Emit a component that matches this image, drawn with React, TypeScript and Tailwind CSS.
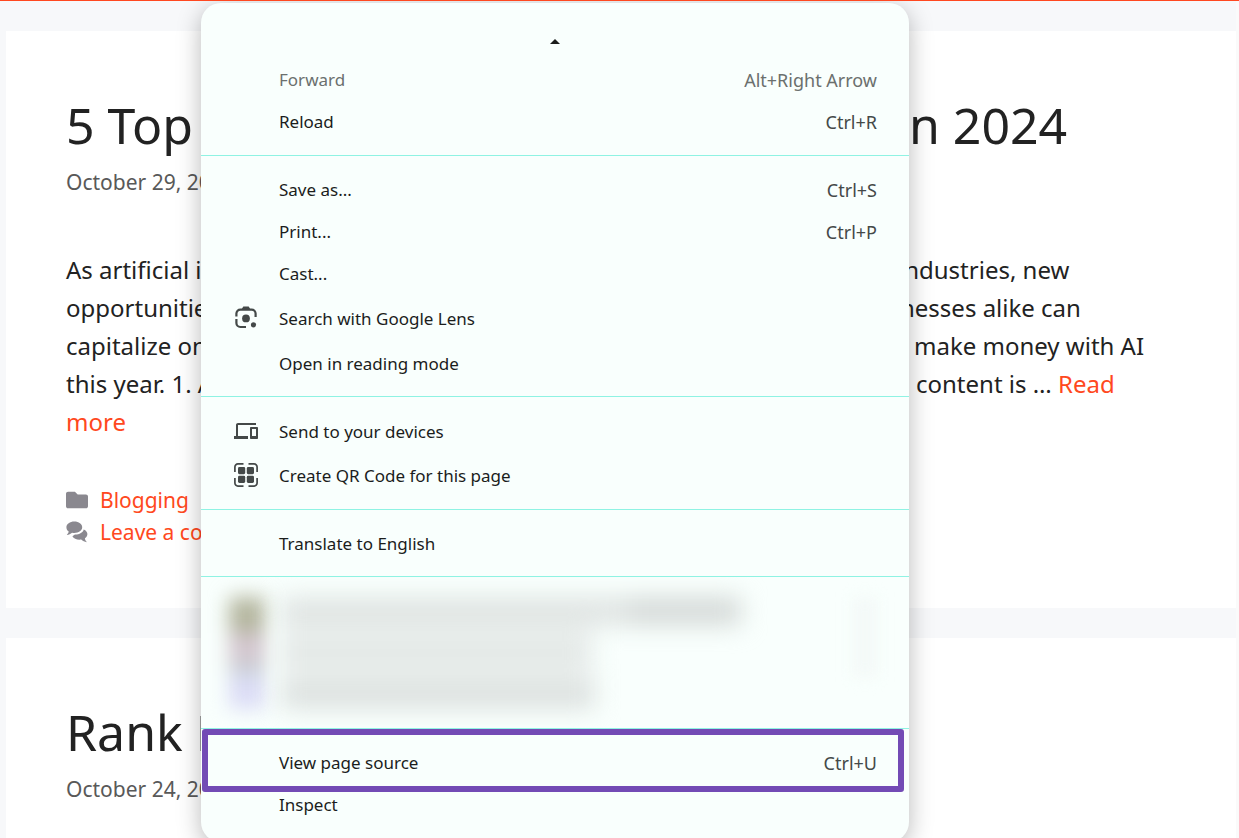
import type { ReactNode } from 'react'
import { FaFolder } from 'react-icons/fa'
import { MdDevices } from 'react-icons/md'

type MenuEntry = {
  label: string
  shortcut?: string
  icon?: ReactNode
  height?: string
  disabled?: boolean
}

function LensIcon() {
  return (
    <svg viewBox="0 0 24 24" className="size-6" fill="none" stroke="currentColor" strokeWidth="2.2">
      <path d="M2.4 10.500V7.600a4 4 0 0 1 4-4h11.200a4 4 0 0 1 4 4V11" />
      <path d="M2.4 13V17a4 4 0 0 0 4 4H12" />
      <path d="M7.500 3.500 9.300.6h5.400l1.800 2.900z" fill="currentColor" stroke="none" />
      <circle cx="12" cy="12.400" r="3.900" fill="currentColor" stroke="none" />
      <circle cx="19.500" cy="18.800" r="2.600" fill="currentColor" stroke="none" />
    </svg>
  )
}

function QrIcon() {
  return (
    <svg viewBox="0 0 24 24" className="size-6" fill="none" stroke="currentColor" strokeWidth="1.7">
      <path d="M.9 9V4a3 3 0 0 1 3-3.100H9.500M14.500.9H20a3 3 0 0 1 3.100 3.100V9M23.100 15v5a3 3 0 0 1-3.100 3.100h-5.500M9.500 23.100H4A3 3 0 0 1 .9 20v-5" />
      <g fill="currentColor" stroke="none">
        <rect x="4" y="4" width="7.200" height="7.200" rx="1.400" />
        <rect x="12.800" y="4" width="7.200" height="7.200" rx="1.400" />
        <rect x="4" y="12.800" width="7.200" height="7.200" rx="1.400" />
        <rect x="12.800" y="12.800" width="7.200" height="7.200" rx="1.400" />
      </g>
    </svg>
  )
}

function CommentsIcon() {
  return (
    <svg viewBox="0 0 22 22" className="size-[22px] text-[#8a888f]" fill="currentColor">
      <path d="M8.300.5C12.800.5 16.200 3 16.200 6.200s-3.500 5.700-7.900 5.700c-.8 0-1.500-.1-2.200-.2-1.500 1.200-3.200 2-5.300 2.200 1-.9 1.700-1.900 1.900-3.300C1.200 9.600.4 8 .4 6.200.4 3 3.900.5 8.300.5z" />
      <path d="M17.700 8.400c2.300.9 3.700 2.600 3.700 4.600 0 1.800-1 3.300-2.500 4.300.2 1.600.9 2.800 2 4-2.300-.3-4.200-1.200-5.700-2.700-.5.100-1.100.1-1.700.1-3.200 0-5.900-1.400-7.100-3.400l2.500-1.900c4.700 0 8.400-2.100 8.800-5z" />
    </svg>
  )
}

const navigationItems: MenuEntry[] = [
  { label: 'Forward', shortcut: 'Alt+Right Arrow', disabled: true },
  { label: 'Reload', shortcut: 'Ctrl+R' },
]

const pageItems: MenuEntry[] = [
  { label: 'Save as...', shortcut: 'Ctrl+S' },
  { label: 'Print...', shortcut: 'Ctrl+P' },
  { label: 'Cast...' },
  { label: 'Search with Google Lens', icon: <LensIcon />, height: 'h-12' },
  { label: 'Open in reading mode' },
]

const shareItems: MenuEntry[] = [
  { label: 'Send to your devices', icon: <MdDevices className="size-6" />, height: 'h-11' },
  { label: 'Create QR Code for this page', icon: <QrIcon />, height: 'h-11' },
]

const translateItems: MenuEntry[] = [{ label: 'Translate to English' }]

const developerItems: MenuEntry[] = [
  { label: 'View page source', shortcut: 'Ctrl+U' },
  { label: 'Inspect' },
]

// Each line runs underneath the menu, so only its two ends are kept
const excerpt = [
  { start: 'As artificial i', end: 'industries, new', width: 'w-[832px]' },
  { start: 'opportunitie', end: 'nesses alike can', width: 'w-[834px]' },
  { start: 'capitalize on', end: 'make money with AI', width: 'w-[848px]' },
]

function MenuItem({ item }: { item: MenuEntry }) {
  return (
    <button
      role="menuitem"
      disabled={item.disabled}
      className={cn(
        'flex w-full items-center pl-[33px] pr-8 text-left text-[17px]',
        item.height ?? 'h-[42px]',
        item.disabled ? 'text-[#6b706e]' : 'text-[#1b1d1c]'
      )}
    >
      <span className="flex w-[45px] shrink-0 items-center pb-[3px] text-[#444948]">{item.icon}</span>
      <span className="flex-1">{item.label}</span>
      {item.shortcut && (
        <span className={cn('text-[18px]', item.disabled ? 'text-[#6b706e]' : 'text-[#444948]')}>
          {item.shortcut}
        </span>
      )}
    </button>
  )
}

function MenuGroup({ items }: { items: MenuEntry[] }) {
  return (
    <div role="group" className="border-t border-[#8ff3e3] pt-[13px] pb-[11px]">
      {items.map((item) => (
        <MenuItem key={item.label} item={item} />
      ))}
    </div>
  )
}

function BlurredItems() {
  return (
    <div className="flex h-[152px] items-start overflow-hidden border-t border-[#8ff3e3] pt-5 pl-7" aria-hidden="true">
      <div className="w-9 blur-[10px]">
        <div className="h-9 bg-[#b3b59d]" />
        <div className="h-8 bg-[#d3c6cf]" />
        <div className="h-2 bg-[#bfd0ce]" />
        <div className="h-9 bg-[#dadbf5]" />
      </div>
      <div className="ml-4 flex-1 blur-[12px]">
        <div className="flex h-7 w-[460px] bg-[#dfe4e2]">
          <div className="ml-auto h-full w-28 bg-[#d4d9d7]" />
        </div>
        <div className="h-4 w-[314px] bg-[#edf2f0]" />
        <div className="h-6 w-[310px] bg-[#e2e7e5]" />
        <div className="h-4 w-[314px] bg-[#edf2f0]" />
        <div className="h-7 w-[314px] bg-[#dce1df]" />
      </div>
      <div className="mr-8 h-20 w-6 bg-[#f3f9f7] blur-[8px]" />
    </div>
  )
}

function ContextMenu() {
  return (
    <div
      role="menu"
      className="absolute left-[201px] top-[2px] w-[708px] rounded-[20px] bg-[#f9fffd] pb-[5px] shadow-[0_6px_24px_rgba(0,0,0,0.28)]"
    >
      <button aria-label="Scroll up" className="flex h-14 w-full items-center justify-center text-[#1b1d1c]">
        <svg viewBox="0 0 10 5" className="mt-5 h-[5px] w-[10px]" fill="currentColor">
          <path d="M0 5 5 0l5 5z" />
        </svg>
      </button>
      <div role="group" className="pb-3">
        {navigationItems.map((item) => (
          <MenuItem key={item.label} item={item} />
        ))}
      </div>
      <MenuGroup items={pageItems} />
      <MenuGroup items={shareItems} />
      <MenuGroup items={translateItems} />
      <BlurredItems />
      <div className="relative">
        <MenuGroup items={developerItems} />
        <div className="pointer-events-none absolute inset-x-0 top-px ml-px mr-[5px] h-[63px] rounded-[3px] border-6 border-[#734bb5]" />
      </div>
    </div>
  )
}

function PostHeader({ start, end, date }: { start: string; end?: string; date: string }) {
  return (
    <header>
      <h2 className="flex text-[50px] leading-[60px] text-[#222222]">
        <span className="w-[830px]">{start}</span>
        {end && <span>{end}</span>}
      </h2>
      <p className="mt-[10px] text-[21px] leading-[34px] text-[#595959]">{date}</p>
    </header>
  )
}

export default function App() {
  return (
    <div className="relative h-screen overflow-hidden border-t border-[#ff4820] bg-[#f7f8fa] font-['Noto_Sans','Segoe_UI',sans-serif]">
      <main className="border-r-3 border-[#fafafa] pl-[6px] pt-[30px]">
        <article className="bg-white px-[60px] pt-16 pb-[60px]">
          <PostHeader start="5 Top" end="in 2024" date="October 29, 20" />
          <div className="mt-[52px] whitespace-nowrap text-[24px] leading-[38px] text-[#222222]">
            {excerpt.map((line) => (
              <p key={line.start} className="flex">
                <span className={line.width}>{line.start}</span>
                <span>{line.end}</span>
              </p>
            ))}
            <p className="flex">
              <span className="w-[850px]">this year. 1. A</span>
              <span>
                content is …{' '}
                <a href="#post" className="text-[#ff4820]">Read</a>
              </span>
            </p>
            <p>
              <a href="#post" className="text-[#ff4820]">more</a>
            </p>
          </div>
          <footer className="mt-[43px] text-[21px] leading-8 text-[#ff4820]">
            <div className="flex items-center gap-3">
              <FaFolder className="size-[22px] text-[#8a888f]" />
              <a href="#blogging">Blogging</a>
            </div>
            <div className="flex items-center gap-3">
              <CommentsIcon />
              <a href="#comments">Leave a co</a>
            </div>
          </footer>
        </article>
        <article className="mt-[30px] bg-white px-[60px] pt-16 pb-[60px]">
          <PostHeader start="Rank M" date="October 24, 20" />
        </article>
      </main>
      <ContextMenu />
    </div>
  )
}

function cn(...classes: string[]) {
  return classes.filter(Boolean).join(' ')
}
